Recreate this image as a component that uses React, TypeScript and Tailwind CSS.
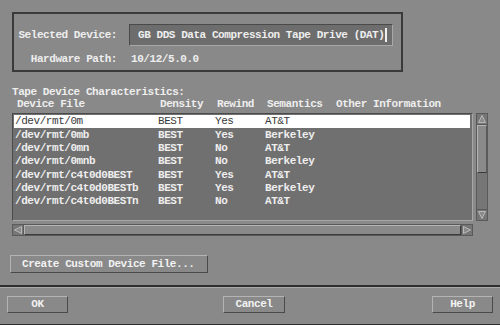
import React from "react";

const rows = [
  ["/dev/rmt/0m", "BEST", "Yes", "AT&T"],
  ["/dev/rmt/0mb", "BEST", "Yes", "Berkeley"],
  ["/dev/rmt/0mn", "BEST", "No", "AT&T"],
  ["/dev/rmt/0mnb", "BEST", "No", "Berkeley"],
  ["/dev/rmt/c4t0d0BEST", "BEST", "Yes", "AT&T"],
  ["/dev/rmt/c4t0d0BESTb", "BEST", "Yes", "Berkeley"],
  ["/dev/rmt/c4t0d0BESTn", "BEST", "No", "AT&T"],
];

function Btn({ label, w, cls = "" }: { label: string; w: string; cls?: string }) {
  return (
    <div
      className={`${w} h-[17px] flex items-center justify-center border border-t-[#b4b4b4] border-l-[#b4b4b4] border-b-[#4a4a4a] border-r-[#4a4a4a] text-[#f2f2f2] ${cls}`}
    >
      {label}
    </div>
  );
}

export default function App() {
  return (
    <div
      className="w-[500px] h-[325px] bg-[#898989] overflow-hidden flex flex-col text-[11px] tracking-[-0.44px] font-bold text-[#eeeeee] border-b border-b-[#2e2e2e]"
      style={{ fontFamily: '"Liberation Mono", "DejaVu Sans Mono", monospace' }}
    >
      {/* Top frame */}
      <div className="ml-[12px] mt-[12px] w-[391px] h-[60px] border-2 border-[#3a3a3a] flex flex-col">
        <div className="flex items-center mt-[10px]">
          <div className="w-[103px] text-right">Selected Device:</div>
          <div className="ml-[12px] w-[264px] h-[22px] bg-[#6d6d6d] border border-t-[#4a4a4a] border-l-[#4a4a4a] border-b-[#a8a8a8] border-r-[#a8a8a8] flex items-center pl-[8px] whitespace-nowrap overflow-hidden">
            <span>GB DDS Data Compression Tape Drive (DAT)</span>
            <span className="ml-[1px] w-[2px] h-[14px] bg-[#f0f0f0]" />
          </div>
        </div>
        <div className="flex items-center mt-[5px]">
          <div className="w-[103px] text-right">Hardware Path:</div>
          <div className="ml-[14px]">10/12/5.0.0</div>
        </div>
      </div>

      <div className="ml-[12px] mt-[14px] leading-[12px]">Tape Device Characteristics:</div>
      <div className="flex ml-[17px] leading-[12px]">
        <div className="w-[143px]">Device File</div>
        <div className="w-[57px]">Density</div>
        <div className="w-[50px]">Rewind</div>
        <div className="w-[69px]">Semantics</div>
        <div>Other Information</div>
      </div>

      {/* list + vertical scroll */}
      <div className="flex ml-[12px] mt-[3px]">
        <div className="w-[461px] h-[108px] bg-[#707070] border border-t-[#4a4a4a] border-l-[#4a4a4a] border-b-[#a8a8a8] border-r-[#a8a8a8] pt-[1px] px-[1px]">
          {rows.map((r, i) => (
            <div
              key={i}
              className={`flex h-[13.33px] items-center pl-[1px] ${i === 0 ? "bg-white text-[#3a3a3a] font-normal mr-[1px]" : ""}`}
            >
              <div className="w-[143px]">{r[0]}</div>
              <div className="w-[57px]">{r[1]}</div>
              <div className="w-[50px]">{r[2]}</div>
              <div>{r[3]}</div>
            </div>
          ))}
        </div>
        <div className="ml-[3px] w-[12px] h-[108px] bg-[#767676] border border-[#5a5a5a] flex flex-col">
          <div className="h-[11px] flex items-center justify-center border-b border-[#5a5a5a]">
            <svg width="8" height="8" viewBox="0 0 8 8">
              <path d="M4 0.5 L7.5 7.5 L0.5 7.5 Z" fill="#8a8a8a" stroke="#b8b8b8" strokeWidth="1" />
            </svg>
          </div>
          <div className="h-[48px] bg-[#8a8a8a] border border-t-[#b4b4b4] border-l-[#b4b4b4] border-b-[#3a3a3a] border-r-[#5a5a5a]" />
          <div className="flex-1" />
          <div className="h-[11px] flex items-center justify-center border-t border-[#5a5a5a]">
            <svg width="8" height="8" viewBox="0 0 8 8">
              <path d="M4 7.5 L7.5 0.5 L0.5 0.5 Z" fill="#8a8a8a" stroke="#b8b8b8" strokeWidth="1" />
            </svg>
          </div>
        </div>
      </div>

      {/* horizontal scroll */}
      <div className="ml-[12px] mt-[3px] w-[461px] h-[12px] bg-[#767676] border border-[#5a5a5a] flex">
        <div className="w-[11px] flex items-center justify-center border-r border-[#5a5a5a]">
          <svg width="8" height="8" viewBox="0 0 8 8">
            <path d="M0.5 4 L7.5 0.5 L7.5 7.5 Z" fill="#8a8a8a" stroke="#b8b8b8" strokeWidth="1" />
          </svg>
        </div>
        <div className="flex-1 bg-[#8a8a8a] border border-t-[#b4b4b4] border-l-[#b4b4b4] border-b-[#3a3a3a] border-r-[#3a3a3a]" />
        <div className="w-[11px] flex items-center justify-center border-l border-[#5a5a5a]">
          <svg width="8" height="8" viewBox="0 0 8 8">
            <path d="M7.5 4 L0.5 0.5 L0.5 7.5 Z" fill="#8a8a8a" stroke="#b8b8b8" strokeWidth="1" />
          </svg>
        </div>
      </div>

      <div className="ml-[10px] mt-[19px]">
        <div className="w-[198px] h-[18px] flex items-center pl-[11px] border border-t-[#b4b4b4] border-l-[#b4b4b4] border-b-[#4a4a4a] border-r-[#4a4a4a] text-[#f2f2f2]">
          Create Custom Device File...
        </div>
      </div>

      <div className="mt-[12px] h-[2px] bg-[#2e2e2e] border-b border-b-[#a8a8a8] box-content" />

      <div className="flex mt-[8px] pl-[7px] pr-[7px] justify-between">
        <Btn label="OK" w="w-[61px]" />
        <Btn label="Cancel" w="w-[62px]" cls="ml-[8px]" />
        <Btn label="Help" w="w-[61px]" />
      </div>
    </div>
  );
}
